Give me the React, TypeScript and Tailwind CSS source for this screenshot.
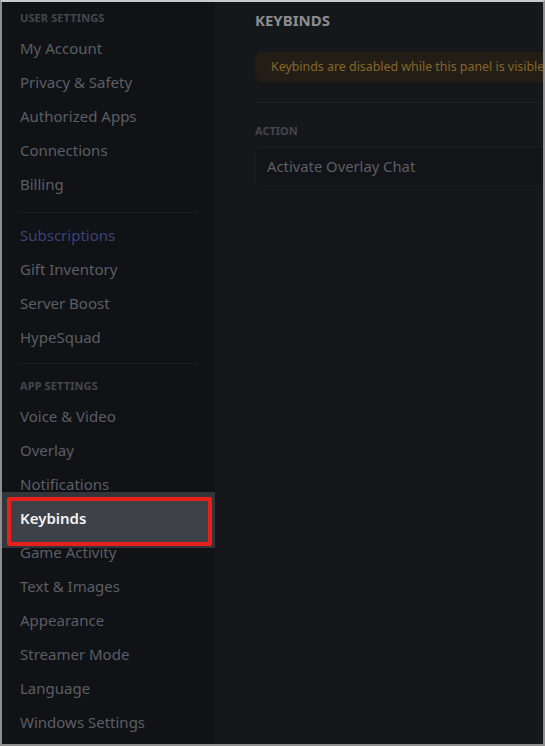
import React from "react";

const font = { fontFamily: '"Noto Sans", "Open Sans", sans-serif' };

function Item({ label, color }: { label: string; color?: string }) {
  return (
    <div
      className={`h-[32px] mb-[2px] flex items-center pl-[18px] text-[15px] ${color ?? "text-[#5b5e65]"}`}
    >
      {label}
    </div>
  );
}

function Header({ label }: { label: string }) {
  return (
    <div className="h-[27px] flex items-center pl-[18px] text-[11px] font-bold uppercase tracking-[0.01em] text-[#44474d]">
      {label}
    </div>
  );
}

export default function App() {
  return (
    <div
      style={font}
      className="w-[545px] h-[746px] overflow-hidden flex border-2 border-[#8e8e8e] border-t-[#c9c9c9] bg-[#111215]"
    >
      <aside className="w-[213px] shrink-0 bg-[#111215] pt-[3px]">
        <Header label="User Settings" />
        <Item label="My Account" />
        <Item label="Privacy & Safety" />
        <Item label="Authorized Apps" />
        <Item label="Connections" />
        <Item label="Billing" />
        <div className="mx-[18px] mt-[12px] mb-[6px] h-px bg-[#1d1e22]" />
        <Item label="Subscriptions" color="text-[#3b4376]" />
        <Item label="Gift Inventory" />
        <Item label="Server Boost" />
        <Item label="HypeSquad" />
        <div className="mx-[18px] mt-[10px] mb-[9px] h-px bg-[#1d1e22]" />
        <Header label="App Settings" />
        <Item label="Voice & Video" />
        <Item label="Overlay" />
        <Item label="Notifications" />
        <div className="relative h-[32px] mb-[2px]">
          <div className="absolute left-0 right-0 top-[-10px] bottom-[-14px] bg-[#33353b]" />
          <div className="absolute left-[5px] right-[3px] top-[-5px] bottom-[-12px] border-[4px] border-[#e8201c] rounded-[2px] bg-[#3e4148]" />
          <div className="relative h-full flex items-center pl-[18px] text-[15px] font-semibold text-[#f2f3f5]">
            Keybinds
          </div>
        </div>
        <Item label="Game Activity" />
        <Item label="Text & Images" />
        <Item label="Appearance" />
        <Item label="Streamer Mode" />
        <Item label="Language" />
        <Item label="Windows Settings" />
      </aside>
      <main className="flex-1 bg-[#16171b] overflow-hidden">
        <div className="w-[420px] pl-[40px] pt-[7px]">
          <div className="text-[15px] font-bold uppercase text-[#8b8d92] h-[22px] flex items-center">
            Keybinds
          </div>
          <div className="mt-[21px] h-[30px] rounded-[8px] bg-[#231e15] flex items-center pl-[16px] whitespace-nowrap text-[12.4px] text-[#86662c]">
            Keybinds are disabled while this panel is visible
          </div>
          <div className="mt-[20px] h-px bg-[#202126]" />
          <div className="mt-[20px] text-[11px] font-bold uppercase text-[#44474d]">Action</div>
          <div className="mt-[7px] h-[39px] rounded-[3px] bg-[#131418] border border-[#1c1d22] flex items-center pl-[11px] text-[14.8px] text-[#5b5e65]">
            Activate Overlay Chat
          </div>
        </div>
      </main>
    </div>
  );
}
